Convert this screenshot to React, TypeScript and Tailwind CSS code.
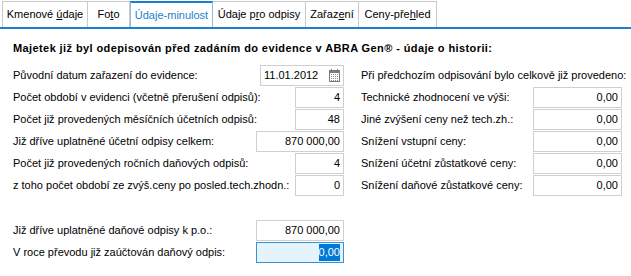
import type { ReactNode } from "react";

const tabs = [
  { label: <>Kmenové <u>ú</u>daje</>, w: "w-[86px]" },
  { label: <>Fo<u>t</u>o</>, w: "w-[42px]" },
  { label: <>Údaje-minulost</>, w: "w-[83px]", active: true },
  { label: <>Údaje p<u>r</u>o odpisy</>, w: "w-[93px]" },
  { label: <>Zařaz<u>e</u>ní</>, w: "w-[53px]" },
  { label: <>Ceny-pře<u>h</u>led</>, w: "w-[78px]" },
];

function CalendarIcon() {
  return (
    <svg width="11" height="13" viewBox="0 0 11 13" className="shrink-0">
      <rect x="0.5" y="1.5" width="10" height="11" fill="#fff" stroke="#7a7a7a" />
      <rect x="1" y="2" width="9" height="2" fill="#7a7a7a" />
      <rect x="2" y="0" width="1" height="2" fill="#7a7a7a" />
      <rect x="8" y="0" width="1" height="2" fill="#7a7a7a" />
      {[5, 7, 9, 11].map((y) =>
        [2, 4, 6, 8].map((x) => <rect key={`${x}-${y}`} x={x} y={y} width="1" height="1" fill="#8a8a8a" />),
      )}
    </svg>
  );
}

function Box({ w, children, focused }: { w: string; children: ReactNode; focused?: boolean }) {
  return (
    <div
      className={`flex h-[21px] items-center justify-end border pr-[3px] ${w} ${
        focused ? "border-[#3393d6] bg-[#e5f3fd]" : "border-[#cfcfcf] bg-white"
      }`}
    >
      {children}
    </div>
  );
}

function Row({ label, children }: { label: string; children: ReactNode }) {
  return (
    <div className="flex h-[22px] items-center justify-between whitespace-nowrap">
      <span>{label}</span>
      {children}
    </div>
  );
}

export default function App() {
  return (
    <div
      className="h-[276px] w-[631px] bg-white text-[11px] text-black"
      style={{ fontFamily: '"Liberation Sans", Arial, sans-serif' }}
    >
      <div className="flex h-[29px] items-end border-b-2 border-[#1a7fd0] pl-[2px]">
        {tabs.map((t, i) => (
          <div
            key={i}
            className={`flex h-[26px] items-center justify-center whitespace-nowrap ${t.w} ${
              t.active
                ? "border-x border-t-2 border-[#8fbbe0] border-t-[#1a7fd0] text-[#1a7fd0]"
                : "border-t border-r border-[#c9c9c9] first:border-l"
            }`}
          >
            <span>{t.label}</span>
          </div>
        ))}
      </div>

      <div className="pl-[13px] pt-[11px]">
        <div className="whitespace-nowrap font-bold tracking-[0.4px]">
          Majetek již byl odepisován před zadáním do evidence v ABRA Gen® - údaje o historii:
        </div>

        <div className="mt-[8px] flex gap-[17px]">
          <div className="w-[331px]">
            <Row label="Původní datum zařazení do evidence:">
              <div className="flex h-[21px] w-[84px] items-center justify-between border border-[#cfcfcf] pl-[3px] pr-[3px]">
                <span>11.01.2012</span>
                <CalendarIcon />
              </div>
            </Row>
            <Row label="Počet období v evidenci (včetně přerušení odpisů):">
              <Box w="w-[49px]">4</Box>
            </Row>
            <Row label="Počet již provedených měsíčních účetních odpisů:">
              <Box w="w-[49px]">48</Box>
            </Row>
            <Row label="Již dříve uplatněné účetní odpisy celkem:">
              <Box w="w-[88px]">870 000,00</Box>
            </Row>
            <Row label="Počet již provedených ročních daňových odpisů:">
              <Box w="w-[49px]">4</Box>
            </Row>
            <Row label="z toho počet období ze zvýš.ceny po posled.tech.zhodn.:">
              <Box w="w-[49px]">0</Box>
            </Row>

            <div className="mt-[23px]">
              <Row label="Již dříve uplatněné daňové odpisy k p.o.:">
                <Box w="w-[88px]">870 000,00</Box>
              </Row>
              <Row label="V roce převodu již zaúčtován daňový odpis:">
                <Box w="w-[88px]" focused>
                  <span className="bg-[#0078d7] text-white">0,00</span>
                </Box>
              </Row>
            </div>
          </div>

          <div className="w-[261px]">
            <div className="flex h-[22px] items-center whitespace-nowrap">
              Při předchozím odpisování bylo celkově již provedeno:
            </div>
            <Row label="Technické zhodnocení ve výši:">
              <Box w="w-[89px]">0,00</Box>
            </Row>
            <Row label="Jiné zvýšení ceny než tech.zh.:">
              <Box w="w-[89px]">0,00</Box>
            </Row>
            <Row label="Snížení vstupní ceny:">
              <Box w="w-[89px]">0,00</Box>
            </Row>
            <Row label="Snížení účetní zůstatkové ceny:">
              <Box w="w-[89px]">0,00</Box>
            </Row>
            <Row label="Snížení daňové zůstatkové ceny:">
              <Box w="w-[89px]">0,00</Box>
            </Row>
          </div>
        </div>
      </div>
    </div>
  );
}
